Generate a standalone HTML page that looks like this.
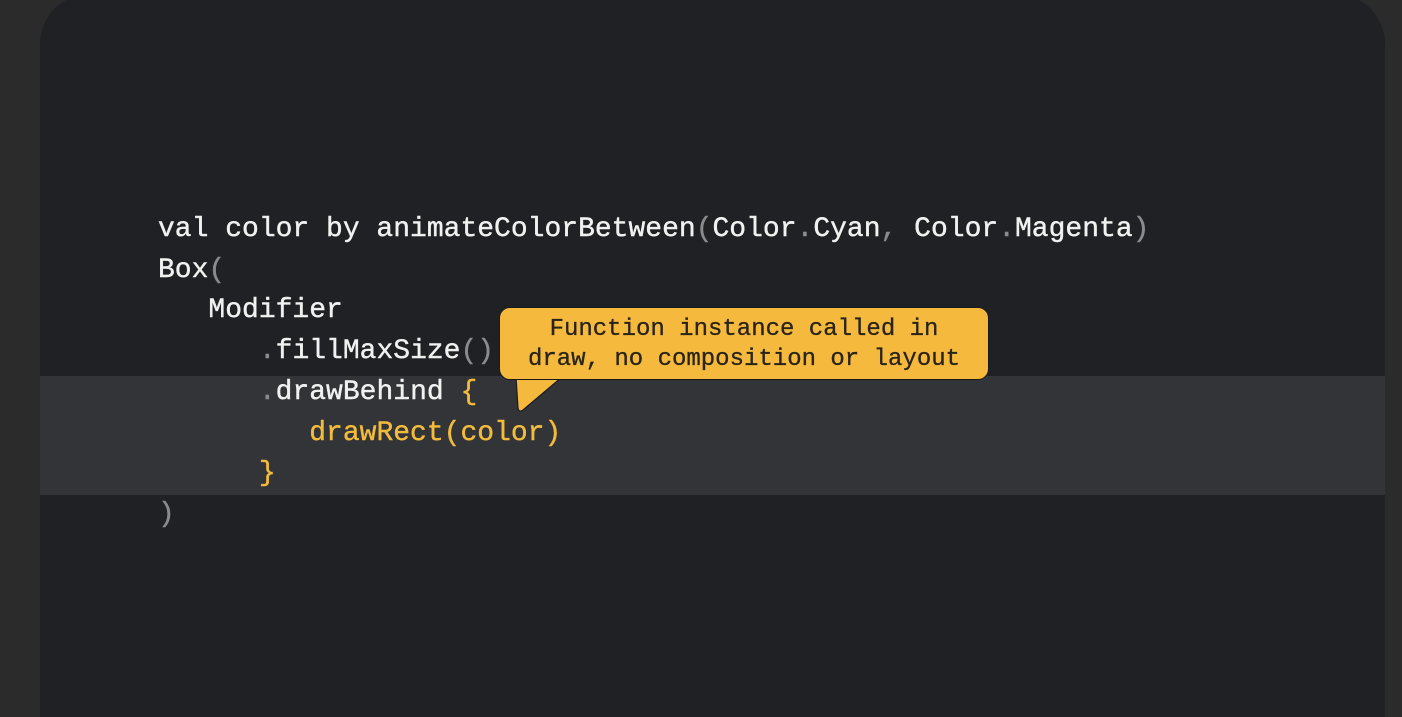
<!DOCTYPE html>
<html><head><meta charset="utf-8"><style>
html,body{margin:0;padding:0;width:1402px;height:717px;overflow:hidden;background:#2b2b2c;position:relative;}
.card{position:absolute;left:40px;top:-6px;width:1345px;height:723px;background:#202124;border-radius:50px 50px 0 0;overflow:hidden;}
.hl{position:absolute;left:40px;top:376px;width:1345px;height:119px;background:#333437;}
.code{position:absolute;left:158px;top:210px;font-family:"Liberation Mono",monospace;font-size:28px;line-height:40.7px;color:#f1f1f1;white-space:pre;-webkit-text-stroke:0.4px currentColor;}
.p{color:#8a8b8d}
.y{color:#f2bb3c}
.call{position:absolute;left:499px;top:307px;width:488px;background:#f4b93d;border:1px solid #1a1a1a;border-radius:11px;box-sizing:content-box;font-family:"Liberation Mono",monospace;font-size:24px;line-height:30px;color:#2a2418;text-align:center;padding-top:7px;height:64px;-webkit-text-stroke:0.3px currentColor;}
svg{position:absolute;left:0;top:0;}
</style></head><body>
<div class="card"></div>
<div class="hl"></div>
<div class="code">val color by animateColorBetween<span class="p">(</span>Color<span class="p">.</span>Cyan<span class="p">,</span> Color<span class="p">.</span>Magenta<span class="p">)</span>
Box<span class="p">(</span>
   Modifier
      <span class="p">.</span>fillMaxSize<span class="p">()</span>
      <span class="p">.</span>drawBehind <span class="y">{</span>
         <span class="y">drawRect(color)</span>
      <span class="y">}</span>
<span class="p">)</span></div>
<svg width="1402" height="717"><path d="M516 377 L518 408 Q519 413 523 410 L562 377 Z" fill="#f4b93d" stroke="#1a1a1a" stroke-width="1.2"/></svg>
<div class="call">Function instance called in<br>draw, no composition or layout</div>
<svg width="1402" height="717"><rect x="517" y="376" width="44" height="3" fill="#f4b93d"/></svg>
</body></html>
